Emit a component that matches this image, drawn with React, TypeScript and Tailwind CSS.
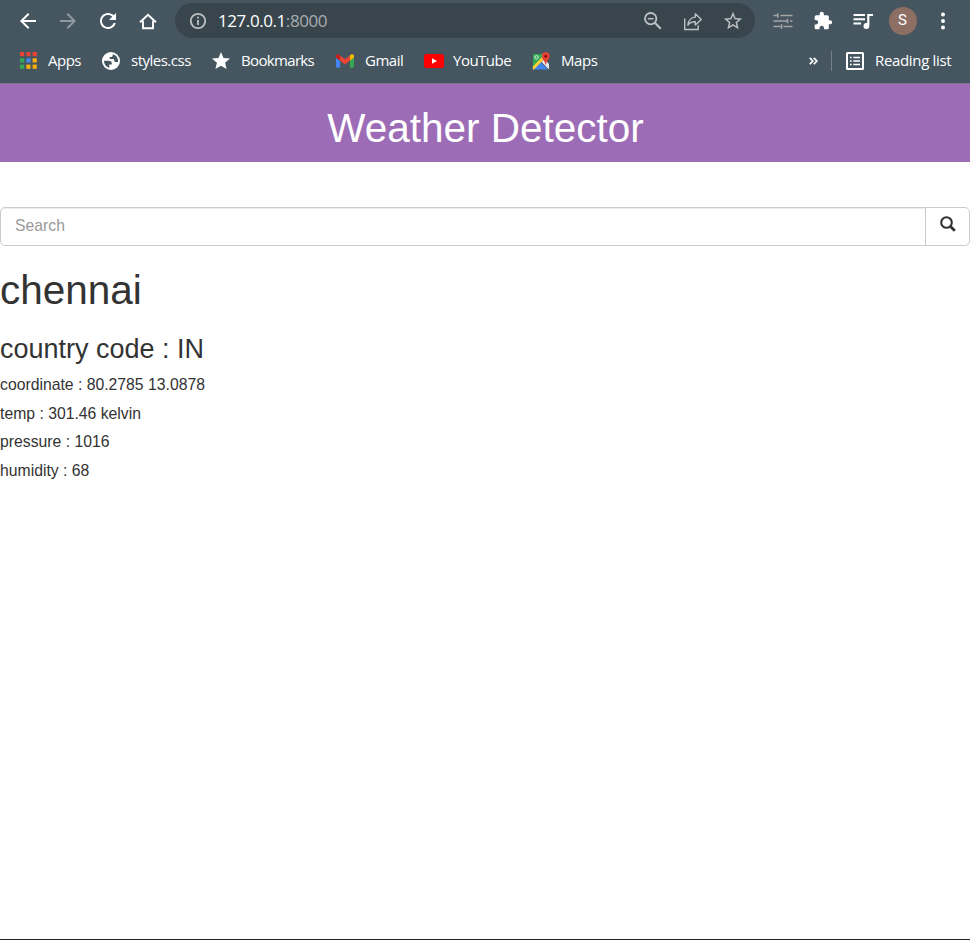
import React from "react";

type IconProps = { d: string; className: string; viewBox?: string };

function Icon({ d, className, viewBox = "0 0 24 24" }: IconProps) {
  return (
    <svg viewBox={viewBox} className={`block shrink-0 ${className}`} fill="currentColor">
      <path d={d} />
    </svg>
  );
}

const BACK = "M20 11H7.83l5.59-5.59L12 4l-8 8 8 8 1.41-1.41L7.83 13H20v-2z";
const FORWARD = "M12 4l-1.41 1.41L16.17 11H4v2h12.17l-5.58 5.59L12 20l8-8z";
const RELOAD =
  "M17.65 6.35C16.2 4.9 14.21 4 12 4c-4.42 0-7.99 3.58-7.99 8s3.57 8 7.99 8c3.73 0 6.84-2.55 7.73-6h-2.08c-.82 2.33-3.04 4-5.65 4-3.31 0-6-2.69-6-6s2.69-6 6-6c1.66 0 3.14.69 4.22 1.78L13 11h7V4l-2.35 2.35z";
const EXTENSION =
  "M20.5 11H19V7c0-1.1-.9-2-2-2h-4V3.5C13 2.12 11.88 1 10.5 1S8 2.12 8 3.5V5H4c-1.1 0-1.99.9-1.99 2v3.8H3.5c1.49 0 2.7 1.21 2.7 2.7s-1.21 2.7-2.7 2.7H2V20c0 1.1.9 2 2 2h3.8v-1.5c0-1.49 1.21-2.7 2.7-2.7 1.49 0 2.7 1.21 2.7 2.7V22H17c1.1 0 2-.9 2-2v-4h1.5c1.38 0 2.5-1.12 2.5-2.5S21.88 11 20.5 11z";
const STAR_OUTLINE =
  "M22 9.24l-7.19-.62L12 2 9.19 8.63 2 9.24l5.46 4.73L5.82 21 12 17.27 18.18 21l-1.63-7.03L22 9.24zM12 15.4l-3.76 2.27 1-4.28-3.32-2.88 4.38-.38L12 6.1l1.71 4.04 4.38.38-3.32 2.88 1 4.28L12 15.4z";
const STAR = "M12 17.27L18.18 21l-1.64-7.03L22 9.24l-7.19-.61L12 2 9.19 8.63 2 9.24l5.46 4.73L5.82 21z";

function HomeIcon() {
  return (
    <svg viewBox="0 0 20 20" className="block size-5" fill="none" stroke="currentColor" strokeWidth="1.9">
      <path d="M2 11.2 10 3.8l8 7.4M5 9.7v7.5h10V9.7" />
    </svg>
  );
}

function InfoIcon() {
  return (
    <svg viewBox="0 0 18 18" className="block size-[18px] shrink-0" fill="none" stroke="currentColor" strokeWidth="1.8">
      <circle cx="9" cy="9" r="7.2" />
      <path d="M9 4.7v1.8M9 8v5" />
    </svg>
  );
}

function ZoomOutIcon() {
  return (
    <svg viewBox="0 0 20 20" className="block size-5" fill="none" stroke="currentColor" strokeWidth="1.8">
      <circle cx="7.7" cy="7.7" r="5.7" />
      <path d="M4.8 7.7h5.8" strokeWidth="1.5" />
      <path d="m11.8 11.8 6 6" strokeWidth="2" />
    </svg>
  );
}

function ShareIcon() {
  return (
    <svg viewBox="0 0 20 20" className="block size-5" fill="none" stroke="currentColor" strokeWidth="1.4">
      <path d="M1.7 7.5v11h13.5v-4.3" />
      <path strokeLinejoin="round" d="M12.3 2.8v3.3C8 6.4 5.5 9 4.9 14.2c1.9-2.8 4.2-3.6 7.4-3.5V14l6-5.6z" />
    </svg>
  );
}

function TuneIcon() {
  return (
    <svg viewBox="0 0 20 16" className="block h-4 w-5" fill="none" stroke="currentColor" strokeWidth="1.4">
      <path d="M.5 2.5h4.2M7.500 2.500h12M.5 8h14M17 8h2.500M.5 13.500h7.200M10.500 13.500h9" />
      <path strokeWidth="1.6" d="M4.800.3v4.400M14.500 5.700v4.600M8.500 11.300v4.400" />
    </svg>
  );
}

function QueueIcon() {
  return (
    <svg viewBox="0 0 20 18" className="block h-[18px] w-5" fill="none" stroke="currentColor" strokeWidth="2">
      <path d="M.5 3h11.500M.5 7.300h11.500M.5 11.600h7.500" />
      <path d="M15.300 13.500V3H20" strokeWidth="2.200" />
      <circle cx="13.400" cy="14" r="2.900" fill="currentColor" stroke="none" />
    </svg>
  );
}

function GlobeIcon() {
  return (
    <svg viewBox="0 0 18 18" className="block size-[18px]">
      <circle cx="9" cy="9" r="9" fill="#fff" />
      <path
        fill="#455660"
        d="M2 8.700h4.300c2.800 0 3.900 1.200 3.500 3.700H7.300v3.300C4.200 15 2 12.200 2 8.700zM10.700 2.200v1.300c0 .9-.6 1.400-1.500 1.400H7.700v2h3.200c1 0 1.400.5 1.400 1.700 0 1 .6 1.500 1.700 1.500H16C16.500 6.200 14.300 3 10.700 2.200z"
      />
    </svg>
  );
}

function ReadingListIcon() {
  return (
    <svg viewBox="0 0 18 18" className="block size-[18px]" fill="none" stroke="currentColor">
      <rect x="1" y="1" width="16" height="16" rx=".5" strokeWidth="2" />
      <path strokeWidth="1.5" d="M4 5.500h1.700M4 9h1.700M4 12.500h1.700M7.300 5.500H14M7.300 9H14M7.300 12.500H14" />
    </svg>
  );
}

const APP_COLORS = ["#ea4335", "#ea4335", "#ea4335", "#34a853", "#4285f4", "#fbaf05", "#34a853", "#fbaf05", "#fbaf05"];

function AppsIcon() {
  return (
    <svg viewBox="0 0 17 17" className="ml-px block size-[17px]">
      {APP_COLORS.map((color, i) => (
        <rect key={i} x={(i % 3) * 6.3} y={Math.floor(i / 3) * 6.3} width="4.2" height="4.2" fill={color} />
      ))}
    </svg>
  );
}

function GmailIcon() {
  return (
    <svg viewBox="52 42 88 66" className="block h-[14px] w-[18px]">
      <path fill="#4285f4" d="M58 108h14V74L52 59v43c0 3.320 2.690 6 6 6" />
      <path fill="#34a853" d="M120 108h14c3.320 0 6-2.690 6-6V59l-20 15" />
      <path fill="#fbbc04" d="M120 48v26l20-15v-8c0-7.420-8.470-11.650-14.400-7.200" />
      <path fill="#ea4335" d="M72 74V48l24 18 24-18v26L96 92" />
      <path fill="#c5221f" d="M52 51v8l20 15V48l-5.600-4.200c-5.940-4.450-14.400-.220-14.400 7.200" />
    </svg>
  );
}

function YouTubeIcon() {
  return (
    <svg viewBox="0 0 20 14" className="block h-[14px] w-5">
      <rect width="20" height="14" rx="2.800" fill="#f00" />
      <path d="M8 4.200v5.600L13 7z" fill="#fff" />
    </svg>
  );
}

function MapsIcon() {
  return (
    <svg viewBox="0 0 18 18" className="block size-[18px]">
      <path fill="#34a853" d="M1 2h13L1 16z" />
      <path fill="#4285f4" d="M2 17.500 9 10.500l7 7z" />
      <path fill="#fbd23c" d="M.800 14.500 10.500 4.800l2 2L2 17.400H.800z" />
      <path fill="#e8eaed" d="m9.500 10 3-3 4.500 5v5.500z" />
      <circle cx="4.500" cy="5.300" r="1.700" fill="none" stroke="#e6f4ea" strokeWidth="1" />
      <path fill="#ea4335" d="M13.700.200a4 4 0 0 1 4 4c0 3-3.200 4-3.600 8.200h-.800c-.400-4.200-3.600-5.200-3.600-8.200a4 4 0 0 1 4-4z" />
      <circle cx="13.700" cy="4.200" r="1.500" fill="#811411" />
    </svg>
  );
}

function NavButton({ children, className = "" }: { children: React.ReactNode; className?: string }) {
  return <button className={`flex h-10 w-10 shrink-0 items-center justify-center ${className}`}>{children}</button>;
}

function Bookmark({ icon, label, className }: { icon: React.ReactNode; label: string; className: string }) {
  return (
    <a className={`flex shrink-0 items-center whitespace-nowrap ${className}`}>
      <span className="flex w-[29px] shrink-0 items-center">{icon}</span>
      <span>{label}</span>
    </a>
  );
}

function Toolbar() {
  return (
    <div className="flex h-10 items-center pl-[7.500px] pt-px text-white">
      <NavButton>
        <Icon d={BACK} className="size-6" />
      </NavButton>
      <NavButton className="text-[#8f999f]">
        <Icon d={FORWARD} className="size-6" />
      </NavButton>
      <NavButton>
        <Icon d={RELOAD} className="size-6" />
      </NavButton>
      <NavButton>
        <HomeIcon />
      </NavButton>
      <div className="ml-[7.500px] flex h-[35px] w-[580px] shrink-0 items-center rounded-full bg-[#39454c] pl-[14px] text-[#bdc1c4]">
        <InfoIcon />
        <span className="ml-[11px] flex-1 pt-px text-[17px] tracking-[-0.430px] text-[#a9adaf]">
          <span className="text-white">127.0.0.1</span>:8000
        </span>
        <NavButton>
          <ZoomOutIcon />
        </NavButton>
        <NavButton>
          <ShareIcon />
        </NavButton>
        <NavButton className="mr-[2px]">
          <Icon d={STAR_OUTLINE} className="size-[22px]" />
        </NavButton>
      </div>
      <NavButton className="ml-[7.500px] text-[#a6a5a4]">
        <TuneIcon />
      </NavButton>
      <NavButton>
        <Icon d={EXTENSION} className="size-5" />
      </NavButton>
      <NavButton>
        <QueueIcon />
      </NavButton>
      <NavButton>
        <span className="flex size-7 items-center justify-center rounded-full bg-[#8d6e63] font-[Roboto] text-[15px]">S</span>
      </NavButton>
      <NavButton>
        <svg viewBox="0 0 4 18" className="block h-[18px] w-1" fill="currentColor">
          <circle cx="2" cy="2.500" r="2" />
          <circle cx="2" cy="9" r="2" />
          <circle cx="2" cy="15.500" r="2" />
        </svg>
      </NavButton>
    </div>
  );
}

function BookmarksBar() {
  return (
    <div className="flex h-[41px] items-center pl-[19px] text-[15px] tracking-[-0.500px] text-white">
      <Bookmark icon={<AppsIcon />} label="Apps" className="w-[83px]" />
      <Bookmark icon={<GlobeIcon />} label="styles.css" className="w-[110px]" />
      <Bookmark icon={<Icon d={STAR} viewBox="2 2 20 20" className="size-[18px]" />} label="Bookmarks" className="w-[124px] tracking-[-0.660px]" />
      <Bookmark icon={<GmailIcon />} label="Gmail" className="w-[88px]" />
      <Bookmark icon={<YouTubeIcon />} label="YouTube" className="w-[108px]" />
      <Bookmark icon={<MapsIcon />} label="Maps" className="w-[80px] tracking-[-0.400px]" />
      <svg viewBox="0 0 9 8" className="ml-auto h-2 w-[9px]" fill="none" stroke="currentColor" strokeWidth="1.700">
        <path d="M.800.800 3.800 4l-3 3.200M4.800.800l3 3.200-3 3.200" />
      </svg>
      <span className="ml-[13px] h-5 w-px bg-[#73818a]" />
      <Bookmark icon={<ReadingListIcon />} label="Reading list" className="ml-[14px] w-[124px] tracking-[-0.330px]" />
    </div>
  );
}

export default function App() {
  return (
    <div className="flex h-[940px] w-[970px] flex-col overflow-hidden border-b border-[#202124] bg-white font-['Liberation_Sans',Arial,sans-serif] text-[15.750px] leading-[22.500px] text-[#333]">
      <header className="h-[83px] shrink-0 bg-[#455660] font-['Open_Sans',sans-serif]">
        <Toolbar />
        <BookmarksBar />
      </header>
      <div className="flex h-[79px] shrink-0 justify-center border-t border-[#7c7292] bg-[#9d6cb6] pl-px pt-[22px]">
        <h1 className="text-[40.500px] leading-[45px] text-white">Weather Detector</h1>
      </div>
      <form className="mt-[45px] flex h-[39px] shrink-0">
        <input
          className="w-[926px] rounded-l-[5px] border border-[#ccc] px-[14px] text-[15.750px] shadow-[inset_0_1px_1px_rgba(0,0,0,0.075)] outline-none placeholder:text-[#999]"
          placeholder="Search"
        />
        <button type="button" className="-ml-px flex flex-1 items-center justify-center rounded-r-[5px] border border-[#ccc] bg-white pb-[5px]">
          <svg viewBox="0 0 16 16" className="block size-4" fill="none" stroke="#333">
            <circle cx="6.500" cy="6.500" r="5.300" strokeWidth="2.100" />
            <path d="m10.300 10.300 4.500 4.400" strokeWidth="2.800" />
          </svg>
        </button>
      </form>
      <h1 className="mt-[22px] text-[40.500px] leading-[45px]">chennai</h1>
      <h3 className="mt-[21px] text-[27px] leading-[30px]">country code : IN</h3>
      <div className="mt-[10px] flex flex-col gap-[6.200px]">
        <p>coordinate : 80.2785 13.0878</p>
        <p>temp : 301.46 kelvin</p>
        <p>pressure : 1016</p>
        <p>humidity : 68</p>
      </div>
    </div>
  );
}
